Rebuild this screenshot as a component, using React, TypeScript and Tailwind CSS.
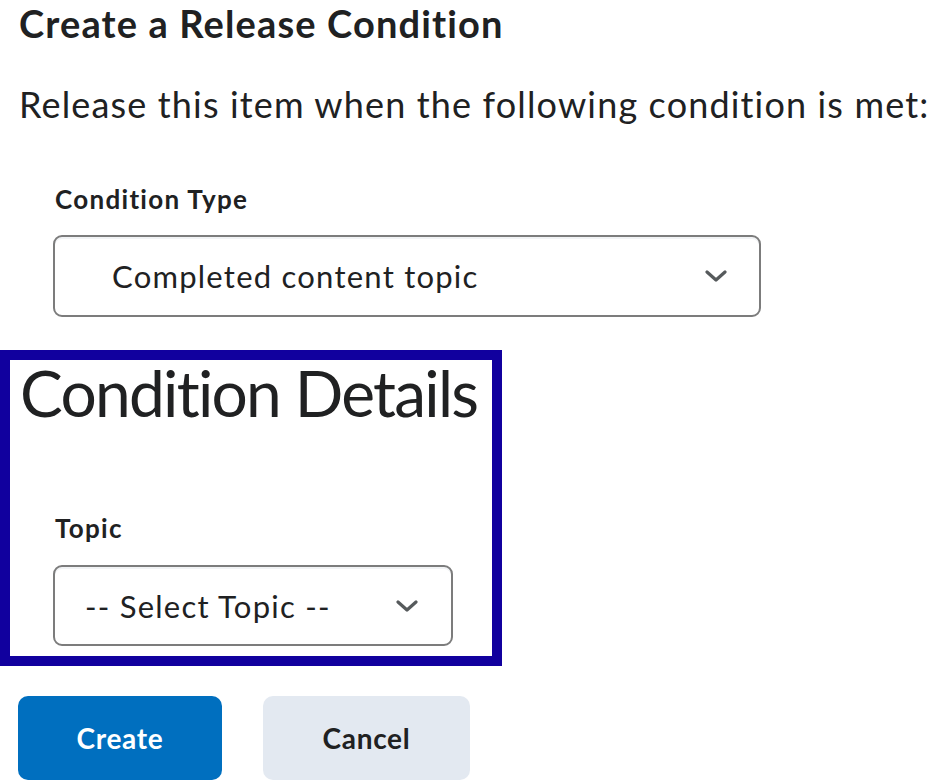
import React from "react";

const Chevron = () => (
  <svg width="22" height="12" viewBox="0 0 22 12" fill="none" className="shrink-0">
    <path d="M2 2 L11 10 L20 2" stroke="#565a5c" strokeWidth="3.2" strokeLinecap="round" strokeLinejoin="round" />
  </svg>
);

export default function App() {
  return (
    <div
      className="min-h-[780px] bg-white text-[#202122] overflow-hidden [font-variant-ligatures:none]"
      style={{ fontFamily: "Lato, 'Noto Sans', sans-serif" }}
    >
      <div className="pl-[19px]">
        <h1 className="text-[38px] leading-[46px] font-bold tracking-[0.03em] whitespace-nowrap">Create a Release Condition</h1>
        <p className="mt-[36px] text-[36px] leading-[44px] tracking-[0.032em] whitespace-nowrap">
          Release this item when the following condition is met:
        </p>
      </div>
      <div className="pl-[53px]">
        <div className="mt-[57px] ml-[2px] text-[26px] leading-[32px] font-bold tracking-[0.05em]">Condition Type</div>
        <div className="mt-[20px] w-[708px] h-[82px] rounded-[9px] border-2 border-[#7c7c7c] shadow-[inset_0_2px_0_0_#f1f3f5] flex items-center justify-between pl-[57px] pr-[32px]">
          <span className="text-[31px] leading-[36px] tracking-[0.04em]">Completed content topic</span>
          <Chevron />
        </div>
      </div>
      <div className="mt-[33px] w-[502px] border-[10px] border-[#11009e] pb-[10px]">
        <div className="pl-[10px] pt-[1px] text-[64px] leading-[64px] tracking-[-0.027em] whitespace-nowrap">Condition Details</div>
        <div className="pl-[43px]">
          <div className="mt-[87px] ml-[2px] text-[26px] leading-[32px] font-bold tracking-[0.05em]">Topic</div>
          <div className="mt-[21px] w-[400px] h-[81px] rounded-[9px] border-2 border-[#7c7c7c] shadow-[inset_0_2px_0_0_#f1f3f5] flex items-center justify-between pl-[30px] pr-[33px]">
            <span className="text-[31px] leading-[36px] tracking-[0.04em] whitespace-nowrap">-- Select Topic --</span>
            <Chevron />
          </div>
        </div>
      </div>
      <div className="mt-[30px] pl-[18px] flex gap-[41px]">
        <button className="w-[204px] h-[84px] rounded-[10px] bg-[#006fbf] text-white text-[28px] font-bold tracking-[0.025em] flex items-center justify-center">
          Create
        </button>
        <button className="w-[207px] h-[84px] rounded-[10px] bg-[#e3e9f1] text-[#202122] text-[28px] font-bold tracking-[0.025em] flex items-center justify-center">
          Cancel
        </button>
      </div>
    </div>
  );
}
